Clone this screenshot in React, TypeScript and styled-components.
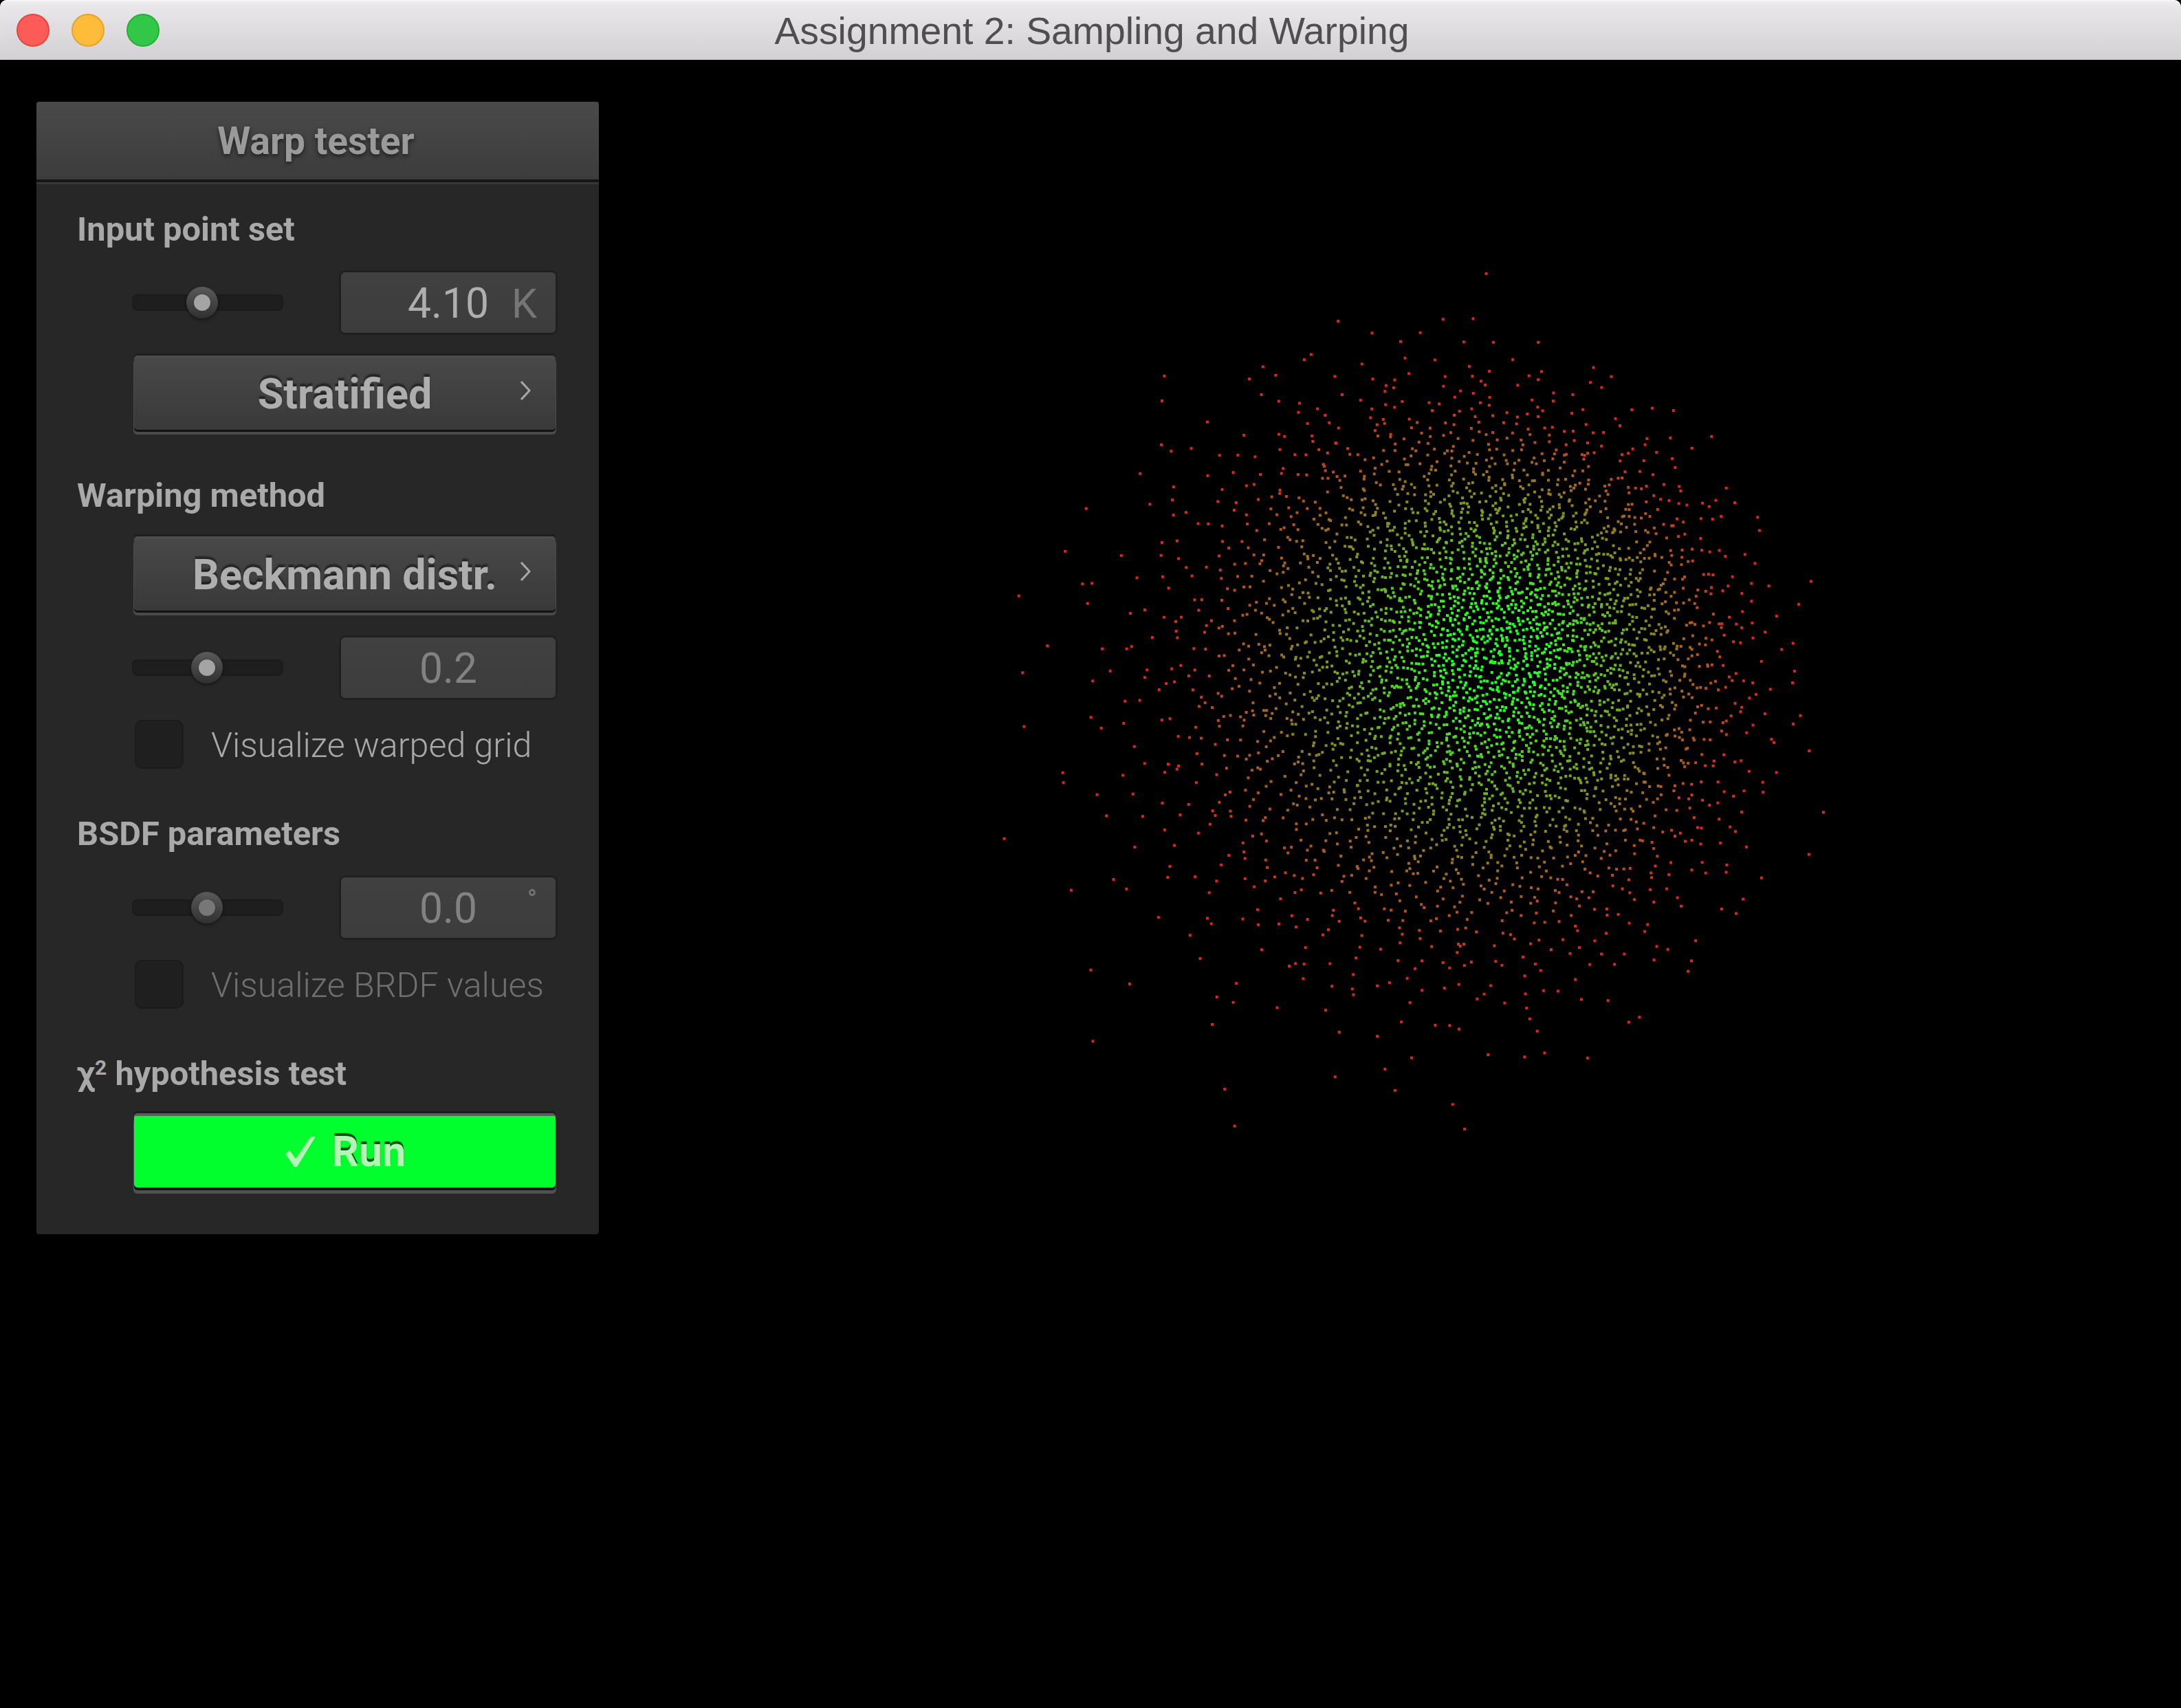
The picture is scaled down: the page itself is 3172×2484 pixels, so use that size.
import React from "react";
import styled, { createGlobalStyle } from "styled-components";

const Global = createGlobalStyle`
  html, body { margin: 0; padding: 0; background: #000; }
  #root { width: 3172px; height: 2484px; overflow: hidden; }
`;

const Window = styled.div`
  width: 3172px;
  height: 2484px;
  display: flex;
  flex-direction: column;
  background: #000;
  font-family: Roboto, "Liberation Sans", sans-serif;
`;

const TitleBar = styled.header`
  position: relative;
  flex: none;
  height: 87px;
  display: flex;
  align-items: center;
  justify-content: center;
  border-radius: 10px 10px 0 0;
  background: linear-gradient(#f0eef0 0, #e8e6e8 12%, #d2d0d2 100%);
  box-shadow: inset 0 2px 1px #f7f7f7;
`;

const Lights = styled.div`
  position: absolute;
  left: 24px;
  top: 20px;
  display: flex;
  gap: 32px;
`;

const Light = styled.span<{ $fill: string; $edge: string }>`
  width: 48px;
  height: 48px;
  box-sizing: border-box;
  border-radius: 50%;
  background: ${(p) => p.$fill};
  border: 2px solid ${(p) => p.$edge};
`;

const Title = styled.h1`
  margin: 0 0 -2px 4px;
  font: 400 55.3px "Liberation Sans", Arial, sans-serif;
  color: #504e50;
`;

const Body = styled.main`
  flex: 1;
  display: flex;
  align-items: flex-start;
  padding: 61px 0 0 53px;
  min-height: 0;
`;

const Panel = styled.section`
  flex: none;
  width: 818px;
  height: 1647px;
  box-sizing: border-box;
  display: flex;
  flex-direction: column;
  background: #272727;
  border-radius: 4px;
`;

const PanelHeader = styled.div`
  flex: none;
  height: 113px;
  display: flex;
  align-items: center;
  justify-content: center;
  box-sizing: border-box;
  padding: 0 5px 0 0;
  border-radius: 4px 4px 0 0;
  background: linear-gradient(#4a4a4a, #3c3c3c);
  font-size: 55px;
  font-weight: 700;
  color: #9a9a9a;
  text-shadow: 0 3px 6px rgba(0, 0, 0, 0.55);
`;

const HeaderRule = styled.div`
  flex: none;
  height: 7px;
  background: linear-gradient(#151515 0, #151515 55%, #3a3a3a 60%, #343434 100%);
`;

const GroupLabel = styled.div<{ $top: number }>`
  height: 60px;
  line-height: 60px;
  margin: ${(p) => p.$top}px 0 0 59px;
  font-size: 48.8px;
  font-weight: 700;
  color: #a9a9a9;
`;

const Sup = styled.sup`
  font-size: 30px;
  line-height: 0;
  vertical-align: 15px;
`;

const Row = styled.div<{ $top: number }>`
  display: flex;
  align-items: center;
  justify-content: space-between;
  margin: ${(p) => p.$top}px 63px 0 139px;
`;

const Track = styled.div`
  position: relative;
  width: 220px;
  height: 24px;
  border-radius: 8px;
  background: #1e1e1e;
  box-shadow: inset 0 0 3px #181818;
`;

const Thumb = styled.div<{ $dim?: boolean }>`
  position: absolute;
  top: 50%;
  width: 46px;
  height: 46px;
  border-radius: 50%;
  transform: translate(-50%, -50%);
  display: flex;
  align-items: center;
  justify-content: center;
  background: linear-gradient(#5a5a5a, #303030);
  box-shadow: 0 2px 5px rgba(0, 0, 0, 0.5);
  &::after {
    content: "";
    width: 24px;
    height: 24px;
    border-radius: 50%;
    background: ${(p) => (p.$dim ? "#777" : "#a4a4a4")};
    box-shadow: 0 0 2px #333;
  }
`;

const ValueBox = styled.div<{ $dim?: boolean }>`
  position: relative;
  width: 312px;
  height: 88px;
  padding-top: 2px;
  box-sizing: border-box;
  display: flex;
  align-items: center;
  justify-content: center;
  border-radius: 6px;
  background: linear-gradient(#414141, #3c3c3c);
  box-shadow: 0 0 0 3px #202020;
  font-size: 60.5px;
  font-weight: 400;
  color: ${(p) => (p.$dim ? "#828282" : "#aeaeae")};
`;

const Unit = styled.span<{ $raised?: boolean }>`
  position: absolute;
  right: 27px;
  top: ${(p) => (p.$raised ? "10px" : "auto")};
  font-size: ${(p) => (p.$raised ? "38px" : "59px")};
  color: #767676;
`;

const Button = styled.button<{ $top: number }>`
  position: relative;
  display: flex;
  align-items: center;
  justify-content: center;
  width: 613px;
  height: 108px;
  box-sizing: border-box;
  padding: 3px 0 0;
  margin: ${(p) => p.$top}px 63px 0 142px;
  border: 0;
  border-radius: 5px;
  background: linear-gradient(#4c4c4c 0, #4c4c4c 3px, #484848 4%, #393939 100%);
  box-shadow: 0 -3px 0 #1d1d1d, 0 3px 0 #121212, 0 6px 0 1px #4a4a4a;
  font: 700 61px Roboto, sans-serif;
  color: #aeaeae;
  text-shadow: 0 -4px 2px rgba(0, 0, 0, 0.45);
`;

const RunButton = styled(Button)`
  gap: 24px;
  height: 108px;
  padding: 0 0 0 2px;
  background: #00ff2c;
  border-top: 4px solid #5c5c5c;
  color: #b4f5b6;
  box-shadow: 0 -3px 0 #1d1d1d, 0 4px 0 #121212, 0 8px 0 1px #505050;
  text-shadow: 0 -4px 1px rgba(0, 50, 10, 0.85);
`;

const Chevron = styled.svg`
  position: absolute;
  right: 36px;
  top: 36px;
  width: 16px;
  height: 30px;
  fill: none;
  stroke: #a8a8a8;
  stroke-width: 3;
`;

const CheckRow = styled.label<{ $top: number; $dim?: boolean }>`
  display: flex;
  align-items: center;
  gap: 40px;
  height: 73px;
  margin: ${(p) => p.$top}px 0 0 143px;
  font-size: 50.2px;
  font-weight: 300;
  color: ${(p) => (p.$dim ? "#6f6f6f" : "#a9a9a9")};
`;

const CheckLabel = styled.span`
  line-height: 70px;
  padding-top: 3px;
`;

const CheckBox = styled.span`
  flex: none;
  width: 71px;
  height: 71px;
  box-sizing: border-box;
  border-radius: 10px;
  background: #1f1f1f;
  border: 2px solid #1b1b1b;
  box-shadow: 0 0 3px #2c2c2c;
`;

const Plot = styled.svg`
  flex: 1;
  height: 2397px;
  margin-top: -61px;
  display: block;
`;

const GRID = 64;
const CX = 2172;
const CY = 950;
const REACH = 1400;
const ORIGIN = 871;
const TOP = 87;

function makePoints() {
  let seed = 20150321;
  const rand = () => {
    seed = (seed + 0x6d2b79f5) | 0;
    let t = Math.imul(seed ^ (seed >>> 15), 1 | seed);
    t = (t + Math.imul(t ^ (t >>> 7), 61 | t)) ^ t;
    return ((t ^ (t >>> 14)) >>> 0) / 4294967296;
  };
  const pts: { x: number; y: number; c: string }[] = [];
  for (let i = 0; i < GRID; i++) {
    for (let j = 0; j < GRID; j++) {
      const u = (i + rand()) / GRID;
      const v = (j + rand()) / GRID;
      const tan = 0.2 * Math.sqrt(-Math.log(1 - u * 0.9999));
      const r = (REACH * tan) / Math.sqrt(1 + tan * tan);
      const phi = 2 * Math.PI * v;
      const k = Math.min(1, Math.max(0, (r - 60) / 370));
      const red = Math.round(30 + 195 * Math.pow(k, 0.9));
      const green = Math.round(235 * Math.pow(1 - k, 1.1) + 35);
      const blue = Math.round(35 - 10 * k);
      const skew = (r / 600) * (r / 600);
      pts.push({
        x: CX + r * Math.cos(phi) - 120 * skew - ORIGIN,
        y: CY + r * Math.sin(phi) + 85 * skew - TOP,
        c: `rgb(${red},${green},${blue})`,
      });
    }
  }
  return pts;
}

const points = makePoints();

const ChevronIcon = () => (
  <Chevron viewBox="0 0 16 30">
    <path d="M2 2 L14 15 L2 28" />
  </Chevron>
);

const CheckIcon = () => (
  <svg width="44" height="44" viewBox="0 0 44 44">
    <path d="M0 25 L6 20 L15 32 L37 0 L44 0 L17 44 L13 44 Z" fill="#b4f5b6" />
  </svg>
);

export default function App() {
  return (
    <Window>
      <Global />
      <TitleBar>
        <Lights>
          <Light $fill="#fc5b57" $edge="#e5453f" />
          <Light $fill="#ffbb3a" $edge="#e5a32a" />
          <Light $fill="#33c748" $edge="#25ae37" />
        </Lights>
        <Title>Assignment 2: Sampling and Warping</Title>
      </TitleBar>
      <Body>
        <Panel>
          <PanelHeader>Warp tester</PanelHeader>
          <HeaderRule />
          <GroupLabel $top={36}>Input point set</GroupLabel>
          <Row $top={32}>
            <Track>
              <Thumb style={{ left: 102 }} />
            </Track>
            <ValueBox>
              4.10
              <Unit>K</Unit>
            </ValueBox>
          </Row>
          <Button $top={33}>
            Stratified
            <ChevronIcon />
          </Button>
          <GroupLabel $top={66}>Warping method</GroupLabel>
          <Button $top={29}>
            Beckmann distr.
            <ChevronIcon />
          </Button>
          <Row $top={39}>
            <Track>
              <Thumb style={{ left: 109 }} />
            </Track>
            <ValueBox $dim>0.2</ValueBox>
          </Row>
          <CheckRow $top={31}>
            <CheckBox />
            <CheckLabel>Visualize warped grid</CheckLabel>
          </CheckRow>
          <GroupLabel $top={64}>BSDF parameters</GroupLabel>
          <Row $top={33}>
            <Track>
              <Thumb $dim style={{ left: 109 }} />
            </Track>
            <ValueBox $dim>
              0.0
              <Unit $raised>°</Unit>
            </ValueBox>
          </Row>
          <CheckRow $top={31} $dim>
            <CheckBox />
            <CheckLabel>Visualize BRDF values</CheckLabel>
          </CheckRow>
          <GroupLabel $top={64}>
            χ<Sup>2</Sup> hypothesis test
          </GroupLabel>
          <RunButton $top={27}>
            <CheckIcon />
            Run
          </RunButton>
        </Panel>
        <Plot viewBox="0 0 2301 2397">
          {points.map((p, i) => (
            <rect key={i} x={p.x} y={p.y} width={4} height={4} fill={p.c} />
          ))}
        </Plot>
      </Body>
    </Window>
  );
}
